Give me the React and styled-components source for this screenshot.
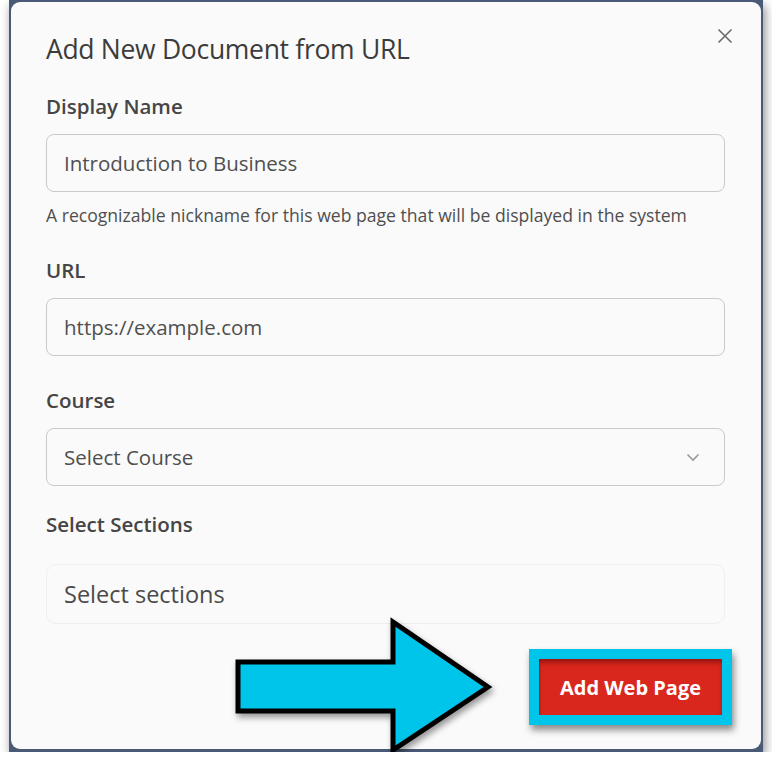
import React from 'react';
import styled, { createGlobalStyle } from 'styled-components';

const GlobalStyle = createGlobalStyle`
  html, body {
    margin: 0;
    padding: 0;
    background: #ffffff;
  }
  body {
    font-family: "Open Sans", "Noto Sans", sans-serif;
  }
  * { box-sizing: border-box; }
`

export default () => {
  return (
    <>
      <GlobalStyle />
      <Frame>
        <Card>
          <Header>
            <Title>Add New Document from URL</Title>
            <CloseButton aria-label="Close">
              <svg width="16" height="16" viewBox="0 0 16 16">
                <path d="M1.5 1.5 L14.5 14.5 M14.5 1.5 L1.5 14.5" stroke="#6b6b6b" strokeWidth="1.6" fill="none" />
              </svg>
            </CloseButton>
          </Header>

          <Field top={28}>
            <Label>Display Name</Label>
            <TextBox>Introduction to Business</TextBox>
            <Help>A recognizable nickname for this web page that will be displayed in the system</Help>
          </Field>

          <Field top={32}>
            <Label>URL</Label>
            <TextBox>https://example.com</TextBox>
          </Field>

          <Field top={32}>
            <Label>Course</Label>
            <TextBox>
              Select Course
              <svg width="14" height="9" viewBox="0 0 14 9">
                <path d="M1.5 1.5 L7 7 L12.5 1.5" stroke="#9a9a9a" strokeWidth="1.6" fill="none" />
              </svg>
            </TextBox>
          </Field>

          <Field top={26}>
            <Label>Select Sections</Label>
            <SectionsBox>Select sections</SectionsBox>
          </Field>

          <Footer>
            <Highlight>
              <SubmitButton>Add Web Page</SubmitButton>
            </Highlight>
          </Footer>
        </Card>

        <Arrow width="270" height="146" viewBox="0 0 270 146">
          <polygon
            points="8,48 163,48 163,8 258,73 163,136 163,97 8,97"
            fill="#00c5ea"
            stroke="#000"
            strokeWidth="5"
            strokeLinejoin="miter"
          />
        </Arrow>
      </Frame>
    </>
  )
}

const Frame = styled.div`
  position: relative;
  margin-left: 9px;
  width: 754px;
  height: 752px;
  padding: 2px 2px 3px 2px;
  background: #4a5a76;
  box-shadow: 2px 5px 10px rgba(0, 0, 0, 0.45);
`

const Card = styled.div`
  height: 100%;
  background: #fafafa;
  border-radius: 9px;
  padding: 31px 36px 0 35px;
  display: flex;
  flex-direction: column;
`

const Header = styled.div`
  display: flex;
  justify-content: space-between;
  align-items: flex-start;
`

const Title = styled.h2`
  margin: 0;
  font-size: 26.5px;
  line-height: 33px;
  font-weight: 500;
  color: #3c3c3c;
  letter-spacing: -0.3px;
`

const CloseButton = styled.button`
  border: none;
  background: none;
  padding: 0;
  margin: -5px -8px 0 0;
  cursor: pointer;
  display: flex;
`

const Field = styled.div`
  display: flex;
  flex-direction: column;
  margin-top: ${p => p.top}px;
`

const Label = styled.label`
  font-size: 20.5px;
  line-height: 24px;
  font-weight: 600;
  color: #454545;
  margin-bottom: 16px;
`

const TextBox = styled.div`
  height: 58px;
  border: 1px solid #c9c9c9;
  border-radius: 8px;
  background: #fafafa;
  padding: 0 24px 0 17px;
  display: flex;
  align-items: center;
  justify-content: space-between;
  font-size: 20.5px;
  color: #4f4f4f;
`

const Help = styled.div`
  margin-top: 12px;
  font-size: 17.6px;
  line-height: 22px;
  color: #4f4f4f;
`

const SectionsBox = styled.div`
  margin-top: 12px;
  height: 60px;
  border: 1px solid #efefef;
  border-radius: 10px;
  padding: 0 17px;
  display: flex;
  align-items: center;
  font-size: 23.5px;
  color: #4a4a4a;
`

const Footer = styled.div`
  margin-top: 25px;
  display: flex;
  justify-content: flex-end;
`

const Highlight = styled.div`
  margin-right: -7px;
  padding: 10px;
  background: #00c5ea;
  box-shadow: 2px 5px 7px rgba(0, 0, 0, 0.45);
`

const SubmitButton = styled.button`
  width: 183px;
  height: 56px;
  border: none;
  background: #d9271d;
  box-shadow: inset 0 4px 4px rgba(90, 0, 0, 0.45);
  color: #fff;
  font-family: "Open Sans", "Noto Sans", sans-serif;
  font-size: 20px;
  font-weight: 700;
  cursor: pointer;
`

const Arrow = styled.svg`
  position: absolute;
  left: 221px;
  top: 614px;
  overflow: visible;
  filter: drop-shadow(2px 4px 3px rgba(0, 0, 0, 0.4));
`
